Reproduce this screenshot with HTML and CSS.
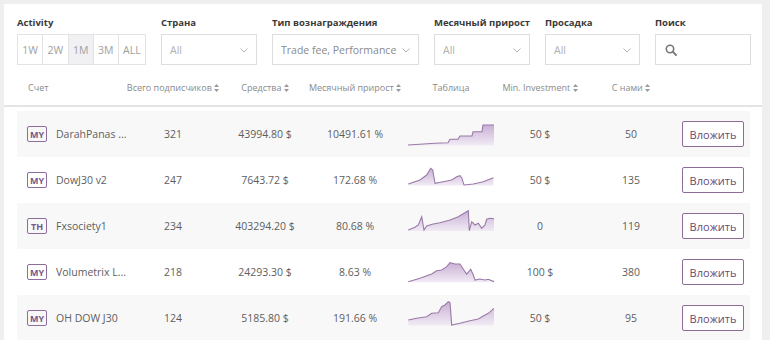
FILE: index.html
```html
<!DOCTYPE html>
<html lang="ru">
<head>
<meta charset="utf-8">
<title>Traders</title>
<link rel="stylesheet" href="styles.css">
</head>
<body>
<div class="panel">
  <div class="filters">
    <div class="fgroup">
      <div class="flabel">Activity</div>
      <div class="seg">
        <span class="segbtn">1W</span><span class="segbtn">2W</span><span class="segbtn active">1M</span><span class="segbtn">3M</span><span class="segbtn">ALL</span>
      </div>
    </div>
    <div class="fgroup">
      <div class="flabel">Страна</div>
      <div class="select"><span>All</span><svg class="chev" width="8" height="5" viewBox="0 0 8 5"><path d="M0.5 0.5 L4 4 L7.5 0.5" fill="none" stroke="#aaa" stroke-width="0.9"/></svg></div>
    </div>
    <div class="fgroup">
      <div class="flabel">Тип вознаграждения</div>
      <div class="select"><span class="dark">Trade fee, Performance</span><svg class="chev" width="8" height="5" viewBox="0 0 8 5"><path d="M0.5 0.5 L4 4 L7.5 0.5" fill="none" stroke="#aaa" stroke-width="0.9"/></svg></div>
    </div>
    <div class="fgroup">
      <div class="flabel">Месячный прирост</div>
      <div class="select"><span>All</span><svg class="chev" width="8" height="5" viewBox="0 0 8 5"><path d="M0.5 0.5 L4 4 L7.5 0.5" fill="none" stroke="#aaa" stroke-width="0.9"/></svg></div>
    </div>
    <div class="fgroup">
      <div class="flabel">Просадка</div>
      <div class="select"><span>All</span><svg class="chev" width="8" height="5" viewBox="0 0 8 5"><path d="M0.5 0.5 L4 4 L7.5 0.5" fill="none" stroke="#aaa" stroke-width="0.9"/></svg></div>
    </div>
    <div class="fgroup">
      <div class="flabel">Поиск</div>
      <div class="search"><svg width="12" height="12" viewBox="0 0 12 12"><circle cx="5" cy="5" r="3.7" fill="none" stroke="#777" stroke-width="1.6"/><path d="M7.7 7.7 L11 11" stroke="#777" stroke-width="1.8" stroke-linecap="round"/></svg></div>
    </div>
  </div>

  <div class="thead grid">
    <div class="th left">Счет</div>
    <div class="th">Всего подписчиков <svg class="sort" width="5" height="8" viewBox="0 0 5 8"><path d="M2.5 0 L5 3 L0 3 Z M2.5 8 L5 5 L0 5 Z" fill="#9a9a9a"/></svg></div>
    <div class="th">Средства <svg class="sort" width="5" height="8" viewBox="0 0 5 8"><path d="M2.5 0 L5 3 L0 3 Z M2.5 8 L5 5 L0 5 Z" fill="#9a9a9a"/></svg></div>
    <div class="th">Месячный прирост <svg class="sort" width="5" height="8" viewBox="0 0 5 8"><path d="M2.5 0 L5 3 L0 3 Z M2.5 8 L5 5 L0 5 Z" fill="#9a9a9a"/></svg></div>
    <div class="th">Таблица</div>
    <div class="th">Min. Investment <svg class="sort" width="5" height="8" viewBox="0 0 5 8"><path d="M2.5 0 L5 3 L0 3 Z M2.5 8 L5 5 L0 5 Z" fill="#9a9a9a"/></svg></div>
    <div class="th">С нами <svg class="sort" width="5" height="8" viewBox="0 0 5 8"><path d="M2.5 0 L5 3 L0 3 Z M2.5 8 L5 5 L0 5 Z" fill="#9a9a9a"/></svg></div>
    <div class="th"></div>
  </div>

  <div class="rows">
    <div class="row grid alt">
      <div class="acc"><span class="badge">MY</span><span class="name">DarahPanas ...</span></div>
      <div class="cell">321</div>
      <div class="cell">43994.80 $</div>
      <div class="cell">10491.61 %</div>
      <div class="cell chart">
        <svg width="86" height="36" viewBox="0 0 86 36">
          <defs><linearGradient id="g1" x1="0" y1="0" x2="0" y2="1"><stop offset="0" stop-color="#c9b0d5"/><stop offset="1" stop-color="#f1ebf4"/></linearGradient></defs>
          <polygon fill="url(#g1)" points="0,29 27,27.3 40,26.7 42,23.3 50,23.3 52,20 64,20 65,15.7 74,15.7 75,9 86,9 86,29.5 0,29.5"/>
          <polyline fill="none" stroke="#9a7aa8" stroke-width="1.1" points="0,29 27,27.3 40,26.7 42,23.3 50,23.3 52,20 64,20 65,15.7 74,15.7 75,9 86,9"/>
        </svg>
      </div>
      <div class="cell">50 $</div>
      <div class="cell">50</div>
      <div class="cell"><button class="invest">Вложить</button></div>
    </div>

    <div class="row grid">
      <div class="acc"><span class="badge">MY</span><span class="name">DowJ30 v2</span></div>
      <div class="cell">247</div>
      <div class="cell">7643.72 $</div>
      <div class="cell">172.68 %</div>
      <div class="cell chart">
        <svg width="86" height="36" viewBox="0 0 86 36">
          <defs><linearGradient id="g2" x1="0" y1="0" x2="0" y2="1"><stop offset="0" stop-color="#c9b0d5"/><stop offset="1" stop-color="#f1ebf4"/></linearGradient></defs>
          <polygon fill="url(#g2)" points="0.3,22 12,18 18.7,13 22.7,6.3 24.7,8 27,21.3 35.3,19.7 43.7,18 48.7,14.7 52,13.7 53.7,15.7 56,23 65.3,22 75.3,19.7 85.3,15.7 85.3,23.5 0.3,23.5"/>
          <polyline fill="none" stroke="#9a7aa8" stroke-width="1.1" points="0.3,22 12,18 18.7,13 22.7,6.3 24.7,8 27,21.3 35.3,19.7 43.7,18 48.7,14.7 52,13.7 53.7,15.7 56,23 65.3,22 75.3,19.7 85.3,15.7"/>
        </svg>
      </div>
      <div class="cell">50 $</div>
      <div class="cell">135</div>
      <div class="cell"><button class="invest">Вложить</button></div>
    </div>

    <div class="row grid alt">
      <div class="acc"><span class="badge">TH</span><span class="name">Fxsociety1</span></div>
      <div class="cell">234</div>
      <div class="cell">403294.20 $</div>
      <div class="cell">80.68 %</div>
      <div class="cell chart">
        <svg width="86" height="36" viewBox="0 0 86 36">
          <defs><linearGradient id="g3" x1="0" y1="0" x2="0" y2="1"><stop offset="0" stop-color="#c9b0d5"/><stop offset="1" stop-color="#f1ebf4"/></linearGradient></defs>
          <polygon fill="url(#g3)" points="0.3,22 7,19.3 10.3,17 13.7,8.7 16,22 18.7,18 25.3,16 32,14.7 42,12 50.3,8.7 60.3,2.7 61.3,22.7 63.7,13.7 67,17 70.3,15.3 73.7,20.3 77,17 78.7,11.3 82,10.3 86,10.7 86,23 0.3,23"/>
          <polyline fill="none" stroke="#9a7aa8" stroke-width="1.1" points="0.3,22 7,19.3 10.3,17 13.7,8.7 16,22 18.7,18 25.3,16 32,14.7 42,12 50.3,8.7 60.3,2.7 61.3,22.7 63.7,13.7 67,17 70.3,15.3 73.7,20.3 77,17 78.7,11.3 82,10.3 86,10.7"/>
        </svg>
      </div>
      <div class="cell">0</div>
      <div class="cell">119</div>
      <div class="cell"><button class="invest">Вложить</button></div>
    </div>

    <div class="row grid">
      <div class="acc"><span class="badge">MY</span><span class="name">Volumetrix L...</span></div>
      <div class="cell">218</div>
      <div class="cell">24293.30 $</div>
      <div class="cell">8.63 %</div>
      <div class="cell chart">
        <svg width="86" height="36" viewBox="0 0 86 36">
          <defs><linearGradient id="g4" x1="0" y1="0" x2="0" y2="1"><stop offset="0" stop-color="#c9b0d5"/><stop offset="1" stop-color="#f1ebf4"/></linearGradient></defs>
          <polygon fill="url(#g4)" points="0.3,27.7 12,24.3 23.7,20 28.7,16.7 33.7,16 38.7,12.7 42,8.7 47,10 52,10 57,17.7 58.7,20 62.7,15.3 65.3,21 67,26 72,25 77,26 80.3,25.3 86,27.7 86,28.2 0.3,28.2"/>
          <polyline fill="none" stroke="#9a7aa8" stroke-width="1.1" points="0.3,27.7 12,24.3 23.7,20 28.7,16.7 33.7,16 38.7,12.7 42,8.7 47,10 52,10 57,17.7 58.7,20 62.7,15.3 65.3,21 67,26 72,25 77,26 80.3,25.3 86,27.7"/>
        </svg>
      </div>
      <div class="cell">100 $</div>
      <div class="cell">380</div>
      <div class="cell"><button class="invest">Вложить</button></div>
    </div>

    <div class="row grid alt">
      <div class="acc"><span class="badge">MY</span><span class="name">OH DOW J30</span></div>
      <div class="cell">124</div>
      <div class="cell">5185.80 $</div>
      <div class="cell">191.66 %</div>
      <div class="cell chart">
        <svg width="86" height="36" viewBox="0 0 86 36">
          <defs><linearGradient id="g5" x1="0" y1="0" x2="0" y2="1"><stop offset="0" stop-color="#c9b0d5"/><stop offset="1" stop-color="#f1ebf4"/></linearGradient></defs>
          <polygon fill="url(#g5)" points="0.3,20 8.7,18.3 18.7,16.7 23.7,13.3 30.3,12.7 33.7,6.7 37,5 40.3,1.7 42,2.7 43.7,25 52,23.3 62,20.7 70.3,19 75.3,16 80.3,13.3 86,8.3 86,25.5 0.3,25.5"/>
          <polyline fill="none" stroke="#9a7aa8" stroke-width="1.1" points="0.3,20 8.7,18.3 18.7,16.7 23.7,13.3 30.3,12.7 33.7,6.7 37,5 40.3,1.7 42,2.7 43.7,25 52,23.3 62,20.7 70.3,19 75.3,16 80.3,13.3 86,8.3"/>
        </svg>
      </div>
      <div class="cell">50 $</div>
      <div class="cell">95</div>
      <div class="cell"><button class="invest">Вложить</button></div>
    </div>
  </div>
</div>
</body>
</html>
```

FILE: styles.css
```css
html, body {
  margin: 0;
  padding: 0;
}
body {
  background: #efefef;
  font-family: "Open Sans", "Liberation Sans", sans-serif;
  color: #555;
  padding: 4px 8px 0 4px;
  height: 340px;
  box-sizing: border-box;
  overflow: hidden;
}
.panel {
  background: #fff;
  width: 758px;
  min-height: 336px;
}
.filters {
  display: grid;
  grid-template-columns: 129px 96px 147px 96px 95px 96px;
  column-gap: 15px;
  padding: 12px 0 0 13px;
}
.flabel {
  font-size: 9.5px;
  font-weight: 700;
  color: #3a3a3a;
  line-height: 14px;
  height: 14px;
  margin-bottom: 4px;
  white-space: nowrap;
}
.seg {
  display: flex;
  height: 31px;
  border: 1px solid #e3e3e3;
  box-sizing: border-box;
}
.segbtn {
  flex: 1 1 auto;
  display: flex;
  align-items: center;
  justify-content: center;
  font-size: 10.5px;
  color: #a0a0a0;
  border-right: 1px solid #e3e3e3;
}
.segbtn:last-child {
  border-right: none;
}
.segbtn.active {
  background: #f1f0f3;
}
.select, .search {
  height: 31px;
  border: 1px solid #dedede;
  box-sizing: border-box;
  display: flex;
  align-items: center;
  justify-content: space-between;
  padding: 0 8px 0 8px;
  font-size: 10.5px;
  color: #b0b0b0;
}
.select .dark {
  color: #8a8a8a;
  white-space: nowrap;
}
.select .chev {
  margin-top: 2px;
  flex: none;
}
.search {
  justify-content: flex-start;
  padding-left: 9px;
}
.grid {
  display: grid;
  grid-template-columns: 101px 110px 74px 106px 86px 92px 90px 74px;
  align-items: center;
}
.thead {
  margin: 14px 12px 0 13px;
  height: 26px;
  align-items: start;
}
.th {
  font-size: 9px;
  color: #8a8a8a;
  line-height: 18px;
  text-align: center;
  white-space: nowrap;
}
.th.left {
  text-align: left;
  padding-left: 11px;
}
.sort {
  vertical-align: -1px;
}
.rows {
  border-top: 2px solid #e4e4e4;
  padding: 4px 12px 0 13px;
}
.row {
  height: 46px;
}
.row.alt {
  background: #f8f8f8;
}
.acc {
  display: flex;
  align-items: center;
  padding-left: 10px;
  white-space: nowrap;
}
.badge {
  width: 20px;
  height: 16px;
  box-sizing: border-box;
  border: 1px solid #8e6c9c;
  border-radius: 2px;
  color: #7a5689;
  font-size: 9px;
  font-weight: 700;
  display: flex;
  align-items: center;
  justify-content: center;
  margin-right: 9px;
  flex: none;
}
.name {
  font-size: 10.5px;
  color: #5e5e5e;
}
.cell {
  font-size: 10.5px;
  text-align: center;
  color: #5e5e5e;
  white-space: nowrap;
}
.chart svg {
  display: block;
}
.invest {
  font-family: "Open Sans", "Liberation Sans", sans-serif;
  width: 62px;
  height: 26px;
  background: #fff;
  border: 1px solid #8b6d97;
  border-radius: 2px;
  color: #654b75;
  font-size: 11px;
  padding: 0;
  display: block;
  margin: 0 auto;
}
```
